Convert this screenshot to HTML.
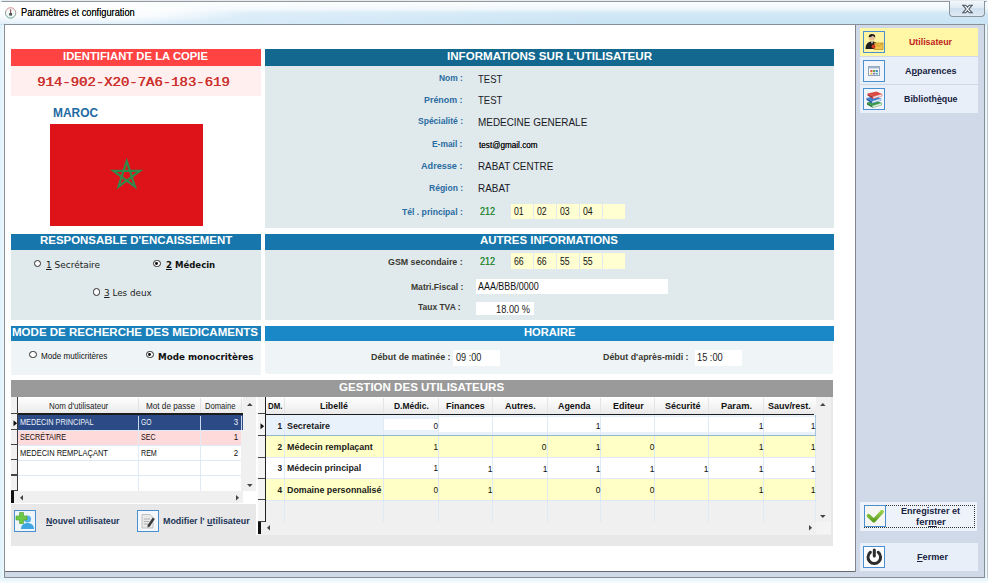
<!DOCTYPE html>
<html lang="fr"><head><meta charset="utf-8"><title>Paramètres et configuration</title>
<style>
*{box-sizing:border-box;margin:0;padding:0}
html,body{width:988px;height:583px;overflow:hidden;background:#e9f6fc;font-family:"Liberation Sans",sans-serif;font-size:11px;color:#1a1a1a}
.a{position:absolute}
.t{white-space:nowrap;transform-origin:0 50%}
u{text-decoration:underline}
svg{display:block}
.rc{width:7.6px;height:7.6px;border:1.1px solid #2a2a2a;border-radius:50%;background:#fff}
.rc i{position:absolute;left:1.3px;top:1.3px;width:2.8px;height:2.8px;background:#111;border-radius:50%}
</style></head><body>
<div class="a" style="left:0px;top:0px;width:988px;height:583px;background:#e8f6fc"></div>
<div class="a" style="left:0px;top:0px;width:988px;height:25px;background:linear-gradient(#e6eaee 0,#e6eaee 1px,#94999e 1px,#94999e 2px,#fbfdfe 2px,#f0f7fc 9px,#d2e8f6 13px,#c9e4f5 23px,#c9e4f5 100%);border-radius:5px 5px 0 0"></div>
<div class="a" style="left:0px;top:2px;width:420px;height:22px;background:radial-gradient(ellipse 170px 13px at 80px 10px,rgba(255,255,255,.95) 0,rgba(255,255,255,.8) 50%,rgba(255,255,255,0) 100%)"></div>
<div class="a" style="left:0px;top:2px;width:600px;height:22px;background:linear-gradient(90deg,rgba(255,255,255,.45),rgba(255,255,255,0))"></div>
<div class="a" style="left:0px;top:25px;width:4px;height:558px;background:linear-gradient(90deg,#dff2fa,#ecf8fd)"></div>
<div class="a" style="left:985px;top:25px;width:3px;height:558px;background:linear-gradient(90deg,#d9eef9,#f4fbfe 60%,#9a9fa5 100%)"></div>
<div class="a" style="left:0px;top:578px;width:988px;height:5px;background:linear-gradient(#e4f3fb,#f6fcfe)"></div>
<div class="a" style="left:4px;top:24px;width:981px;height:554px;background:#d0d9e8;border:1px solid #878e96"></div>
<div class="a" style="left:5px;top:25px;width:850px;height:546.5px;background:#fff"></div>
<div class="a" style="left:5px;top:571px;width:851px;height:1px;background:#666a70"></div>
<div class="a" style="left:855px;top:25px;width:1.3px;height:547px;background:#80858c"></div>
<svg class="a" style="left:4px;top:6px" width="14" height="14" viewBox="0 0 14 14"><defs><linearGradient id="ig" x1="0" y1="0" x2="0" y2="1"><stop offset="0" stop-color="#d98a8a"/><stop offset=".5" stop-color="#9aa3a3"/><stop offset="1" stop-color="#5fa58a"/></linearGradient></defs><circle cx="6.6" cy="6.900" r="5.200" fill="#f3f6f6" stroke="url(#ig)" stroke-width="1"/><path d="M6.600 3.200v4" stroke="#8a5050" stroke-width="1"/><rect x="5.200" y="7" width="2.800" height="2.600" fill="#4a5050"/></svg>
<div class="a t" style="left:21.00px;top:4.80px;font:11px/15px 'Liberation Sans',sans-serif;color:#000;transform:scaleX(0.8414);text-shadow:0 0 .4px rgba(0,0,0,.6);">Paramètres et configuration</div>
<div class="a" style="left:949px;top:1px;width:36px;height:16px;border:1px solid #8b939c;border-top:none;border-radius:0 0 4px 4px;background:linear-gradient(#f3f8fc,#dfeaf4 45%,#cfdfee 50%,#dde9f4)"></div>
<svg class="a" style="left:961px;top:4px" width="13" height="10" viewBox="0 0 13 10"><path d="M1.800 1.200h2.900l1.800 2 1.800-2h2.900l-3.300 3.800 3.300 3.800h-2.900l-1.800-2-1.800 2h-2.900l3.300-3.800z" fill="#fff" stroke="#4e5662" stroke-width="1.100"/></svg>
<div class="a" style="left:11px;top:49px;width:250px;height:17px;background:#ff4343"></div>
<div class="a t" style="left:63.10px;top:49.30px;font:bold 11px/15px 'Liberation Sans',sans-serif;color:#fff;transform:scaleX(1.0256);">IDENTIFIANT DE LA COPIE</div>
<div class="a" style="left:11px;top:66px;width:250px;height:29.6px;background:#ffefee"></div>
<div class="a t" style="left:37.00px;top:74.20px;font:12.5px/18px 'Liberation Mono',monospace;color:#cc2f2c;transform:scaleX(1.1158);text-shadow:.5px 0 0 #cc2f2c;">914-902-X20-7A6-183-619</div>
<div class="a t" style="left:52.50px;top:103.60px;font:bold 12.5px/18px 'Liberation Sans',sans-serif;color:#1d6aa2;transform:scaleX(0.9530);">MAROC</div>
<svg class="a" style="left:50px;top:124px" width="153" height="102" viewBox="0 0 153 102"><rect width="153" height="102" fill="#de1219"/><polygon points="76.7,37.2 84.93,62.53 63.38,46.87 90.02,46.87 68.47,62.53" fill="none" stroke="#2f8a4c" stroke-width="2.2" stroke-linejoin="miter"/></svg>
<div class="a" style="left:11px;top:234px;width:250px;height:16px;background:#1777ac"></div>
<div class="a t" style="left:39.50px;top:232.70px;font:bold 11px/15px 'Liberation Sans',sans-serif;color:#fff;transform:scaleX(1.0403);">RESPONSABLE D'ENCAISSEMENT</div>
<div class="a" style="left:11px;top:250px;width:250px;height:69.5px;background:#e0e9ec"></div>
<div class="a rc" style="left:33.7px;top:259.8px"></div>
<div class="a t" style="left:45.50px;top:258.80px;font:9px/13px 'DejaVu Sans',sans-serif;color:#222;transform:scaleX(0.9943);"><u>1</u> Secrétaire</div>
<div class="a rc" style="left:153.2px;top:259.8px"><i></i></div>
<div class="a t" style="left:166.00px;top:258.80px;font:bold 9px/13px 'DejaVu Sans',sans-serif;color:#111;transform:scaleX(0.9493);"><u>2</u> Médecin</div>
<div class="a rc" style="left:92.7px;top:288.3px"></div>
<div class="a t" style="left:104.00px;top:287.40px;font:9px/13px 'DejaVu Sans',sans-serif;color:#222;transform:scaleX(0.9793);"><u>3</u> Les deux</div>
<div class="a" style="left:11px;top:326px;width:250px;height:14.5px;background:#1b7fba"></div>
<div class="a t" style="left:12.00px;top:324.40px;font:bold 11.5px/16px 'Liberation Sans',sans-serif;color:#fff;transform:scaleX(1.0026);">MODE DE RECHERCHE DES MEDICAMENTS</div>
<div class="a" style="left:11px;top:340.5px;width:250px;height:34.2px;background:#eff4f7"></div>
<div class="a rc" style="left:29.2px;top:350.8px"></div>
<div class="a t" style="left:41.00px;top:348.80px;font:9.5px/13px 'Liberation Sans',sans-serif;color:#111;transform:scaleX(0.8543);">Mode mutlicritères</div>
<div class="a rc" style="left:146.0px;top:350.8px"><i></i></div>
<div class="a t" style="left:158.40px;top:349.90px;font:bold 9.2px/13px 'DejaVu Sans',sans-serif;color:#111;transform:scaleX(0.9520);">Mode monocritères</div>
<div class="a" style="left:265px;top:49px;width:569px;height:17px;background:#13688f"></div>
<div class="a t" style="left:447.00px;top:49.30px;font:bold 11px/15px 'Liberation Sans',sans-serif;color:#fff;transform:scaleX(1.0529);">INFORMATIONS SUR L'UTILISATEUR</div>
<div class="a" style="left:265px;top:66px;width:569px;height:162px;background:#e0e9ec"></div>
<div class="a t" style="left:438.90px;top:72.30px;font:bold 9.3px/13px 'Liberation Sans',sans-serif;color:#2a6ca2;transform:scaleX(0.9071);">Nom :</div>
<div class="a t" style="left:424.30px;top:93.70px;font:bold 9.3px/13px 'Liberation Sans',sans-serif;color:#2a6ca2;transform:scaleX(0.9552);">Prénom :</div>
<div class="a t" style="left:417.80px;top:115.20px;font:bold 9.3px/13px 'Liberation Sans',sans-serif;color:#2a6ca2;transform:scaleX(0.9164);">Spécialité :</div>
<div class="a t" style="left:432.40px;top:137.90px;font:bold 9.3px/13px 'Liberation Sans',sans-serif;color:#2a6ca2;transform:scaleX(0.9050);">E-mail :</div>
<div class="a t" style="left:421.30px;top:160.40px;font:bold 9.3px/13px 'Liberation Sans',sans-serif;color:#2a6ca2;transform:scaleX(0.9791);">Adresse :</div>
<div class="a t" style="left:428.70px;top:181.50px;font:bold 9.3px/13px 'Liberation Sans',sans-serif;color:#2a6ca2;transform:scaleX(0.9168);">Région :</div>
<div class="a t" style="left:402.00px;top:206.00px;font:bold 9.3px/13px 'Liberation Sans',sans-serif;color:#2a6ca2;transform:scaleX(0.9265);">Tél . principal :</div>
<div class="a" style="left:265px;top:234px;width:569px;height:16px;background:#1777ac"></div>
<div class="a t" style="left:480.00px;top:232.70px;font:bold 11px/15px 'Liberation Sans',sans-serif;color:#fff;transform:scaleX(1.0423);">AUTRES INFORMATIONS</div>
<div class="a" style="left:265px;top:250px;width:569px;height:69.5px;background:#e0e9ec"></div>
<div class="a" style="left:265px;top:326px;width:569px;height:14.5px;background:#1a88c7"></div>
<div class="a t" style="left:523.80px;top:324.80px;font:bold 11px/15px 'Liberation Sans',sans-serif;color:#fff;transform:scaleX(1.0133);">HORAIRE</div>
<div class="a" style="left:265px;top:340.5px;width:567.5px;height:33.5px;background:#eff4f7;border-radius:0 0 2px 3px"></div>
<div class="a" style="left:11px;top:380.2px;width:822px;height:17px;background:#9a9a9a"></div>
<div class="a t" style="left:338.50px;top:379.50px;font:bold 11px/15px 'Liberation Sans',sans-serif;color:#fff;transform:scaleX(1.0484);">GESTION DES UTILISATEURS</div>
<div class="a" style="left:11px;top:396.5px;width:822px;height:149px;background:#e8e8e8"></div>
<div class="a t" style="left:477.90px;top:71.20px;font:11.3px/16px 'Liberation Sans',sans-serif;color:#1a1a26;transform:scaleX(0.8414);">TEST</div>
<div class="a t" style="left:477.90px;top:92.40px;font:11.3px/16px 'Liberation Sans',sans-serif;color:#1a1a26;transform:scaleX(0.8414);">TEST</div>
<div class="a t" style="left:477.90px;top:114.20px;font:11.3px/16px 'Liberation Sans',sans-serif;color:#1a1a26;transform:scaleX(0.8791);">MEDECINE GENERALE</div>
<div class="a t" style="left:479.40px;top:137.50px;font:9.5px/13px 'Liberation Sans',sans-serif;color:#000;transform:scaleX(0.8587);text-shadow:0 0 .4px rgba(0,0,0,.7);">test@gmail.com</div>
<div class="a t" style="left:477.90px;top:158.20px;font:11.3px/16px 'Liberation Sans',sans-serif;color:#1a1a26;transform:scaleX(0.8732);">RABAT CENTRE</div>
<div class="a t" style="left:477.90px;top:179.50px;font:11.3px/16px 'Liberation Sans',sans-serif;color:#1a1a26;transform:scaleX(0.8795);">RABAT</div>
<div class="a t" style="left:480.00px;top:204.60px;font:10px/14px 'Liberation Sans',sans-serif;color:#2e8b3a;transform:scaleX(0.9050);text-shadow:0 0 .3px #2e8b3a;">212</div>
<div class="a" style="left:510.9px;top:203.6px;width:21.7px;height:15.2px;background:#ffffd2"></div>
<div class="a t" style="left:513.80px;top:204.80px;font:10px/14px 'Liberation Sans',sans-serif;color:#111;transform:scaleX(0.8720);">01</div>
<div class="a" style="left:533.9px;top:203.6px;width:21.7px;height:15.2px;background:#ffffd2"></div>
<div class="a t" style="left:536.80px;top:204.80px;font:10px/14px 'Liberation Sans',sans-serif;color:#111;transform:scaleX(0.8720);">02</div>
<div class="a" style="left:556.9px;top:203.6px;width:21.7px;height:15.2px;background:#ffffd2"></div>
<div class="a t" style="left:559.80px;top:204.80px;font:10px/14px 'Liberation Sans',sans-serif;color:#111;transform:scaleX(0.8720);">03</div>
<div class="a" style="left:579.9px;top:203.6px;width:21.7px;height:15.2px;background:#ffffd2"></div>
<div class="a t" style="left:582.80px;top:204.80px;font:10px/14px 'Liberation Sans',sans-serif;color:#111;transform:scaleX(0.8720);">04</div>
<div class="a" style="left:602.9px;top:203.6px;width:21.7px;height:15.2px;background:#ffffd2"></div>
<div class="a t" style="left:388.30px;top:255.50px;font:bold 9.3px/13px 'Liberation Sans',sans-serif;color:#3a3a32;transform:scaleX(0.9509);">GSM secondaire :</div>
<div class="a t" style="left:480.00px;top:254.80px;font:10px/14px 'Liberation Sans',sans-serif;color:#2e8b3a;transform:scaleX(0.9050);text-shadow:0 0 .3px #2e8b3a;">212</div>
<div class="a" style="left:510.9px;top:253.4px;width:21.7px;height:15.2px;background:#ffffd2"></div>
<div class="a t" style="left:513.80px;top:254.60px;font:10px/14px 'Liberation Sans',sans-serif;color:#111;transform:scaleX(0.8720);">66</div>
<div class="a" style="left:533.9px;top:253.4px;width:21.7px;height:15.2px;background:#ffffd2"></div>
<div class="a t" style="left:536.80px;top:254.60px;font:10px/14px 'Liberation Sans',sans-serif;color:#111;transform:scaleX(0.8720);">66</div>
<div class="a" style="left:556.9px;top:253.4px;width:21.7px;height:15.2px;background:#ffffd2"></div>
<div class="a t" style="left:559.80px;top:254.60px;font:10px/14px 'Liberation Sans',sans-serif;color:#111;transform:scaleX(0.8720);">55</div>
<div class="a" style="left:579.9px;top:253.4px;width:21.7px;height:15.2px;background:#ffffd2"></div>
<div class="a t" style="left:582.80px;top:254.60px;font:10px/14px 'Liberation Sans',sans-serif;color:#111;transform:scaleX(0.8720);">55</div>
<div class="a" style="left:602.9px;top:253.4px;width:21.7px;height:15.2px;background:#ffffd2"></div>
<div class="a t" style="left:410.70px;top:280.50px;font:bold 9.3px/13px 'Liberation Sans',sans-serif;color:#3a3a32;transform:scaleX(0.9200);">Matri.Fiscal :</div>
<div class="a" style="left:476px;top:279.4px;width:192px;height:14.6px;background:#fff"></div>
<div class="a t" style="left:478.40px;top:280.20px;font:10px/14px 'Liberation Sans',sans-serif;color:#111;transform:scaleX(0.8935);">AAA/BBB/0000</div>
<div class="a t" style="left:418.40px;top:301.40px;font:bold 9.3px/13px 'Liberation Sans',sans-serif;color:#3a3a32;transform:scaleX(0.9094);">Taux TVA :</div>
<div class="a" style="left:476px;top:302.3px;width:58px;height:12.8px;background:#fff"></div>
<div class="a t" style="left:496.40px;top:303.40px;font:10px/14px 'Liberation Sans',sans-serif;color:#222;transform:scaleX(0.9266);">18.00 %</div>
<div class="a t" style="left:371.00px;top:351.30px;font:bold 9.3px/13px 'Liberation Sans',sans-serif;color:#3a3a32;transform:scaleX(0.9568);">Début de matinée :</div>
<div class="a" style="left:453.1px;top:349.8px;width:47px;height:16.3px;background:#fff"></div>
<div class="a t" style="left:456.00px;top:350.60px;font:10px/14px 'Liberation Sans',sans-serif;color:#222;transform:scaleX(0.9100);">09 :00</div>
<div class="a t" style="left:603.40px;top:351.30px;font:bold 9.3px/13px 'Liberation Sans',sans-serif;color:#3a3a32;transform:scaleX(0.9560);">Début d'après-midi :</div>
<div class="a" style="left:694.5px;top:349.8px;width:47px;height:16.3px;background:#fff"></div>
<div class="a t" style="left:697.30px;top:350.60px;font:10px/14px 'Liberation Sans',sans-serif;color:#222;transform:scaleX(0.9244);">15 :00</div>
<div class="a" style="left:11px;top:397px;width:245px;height:106.5px;background:#fff"></div>
<div class="a" style="left:18px;top:397px;width:225px;height:17px;background:linear-gradient(#ffffff,#f2f2f2 60%,#e9e9e9)"></div>
<div class="a" style="left:138px;top:398px;width:1px;height:15px;background:#e2e2e2"></div>
<div class="a" style="left:200px;top:398px;width:1px;height:15px;background:#e2e2e2"></div>
<div class="a" style="left:241px;top:398px;width:1px;height:15px;background:#e2e2e2"></div>
<div class="a" style="left:11px;top:397px;width:7px;height:94px;background:#f1f1f1"></div>
<div class="a" style="left:17px;top:397px;width:1.4px;height:94px;background:#3a3a3a"></div>
<div class="a" style="left:11px;top:429px;width:7px;height:1.2px;background:#444"></div>
<div class="a" style="left:11px;top:444px;width:7px;height:1.2px;background:#444"></div>
<div class="a" style="left:11px;top:459.2px;width:7px;height:1.2px;background:#444"></div>
<div class="a" style="left:11px;top:474.4px;width:7px;height:1.2px;background:#444"></div>
<div class="a" style="left:11px;top:490.2px;width:7px;height:1.2px;background:#444"></div>
<div class="a" style="left:11px;top:413.3px;width:7px;height:1.2px;background:#444"></div>
<div class="a" style="left:18px;top:414.5px;width:225px;height:15.5px;background:#2b4a86"></div>
<div class="a" style="left:18px;top:430px;width:223px;height:15px;background:#ffdada"></div>
<div class="a" style="left:18px;top:429.5px;width:223px;height:1px;background:#deeaf5"></div>
<div class="a" style="left:18px;top:444.5px;width:223px;height:1px;background:#deeaf5"></div>
<div class="a" style="left:18px;top:459.7px;width:223px;height:1px;background:#deeaf5"></div>
<div class="a" style="left:18px;top:474.9px;width:223px;height:1px;background:#deeaf5"></div>
<div class="a" style="left:18px;top:490.7px;width:223px;height:1px;background:#deeaf5"></div>
<div class="a" style="left:138px;top:430px;width:1px;height:61px;background:#deeaf5"></div>
<div class="a" style="left:200px;top:430px;width:1px;height:61px;background:#deeaf5"></div>
<div class="a" style="left:138px;top:415.5px;width:1.3px;height:14px;background:#c9d9ee"></div>
<div class="a" style="left:200px;top:415.5px;width:1.3px;height:14px;background:#c9d9ee"></div>
<div class="a" style="left:241px;top:415.5px;width:1.3px;height:14px;background:#c9d9ee"></div>
<div class="a" style="left:241px;top:430px;width:2px;height:61px;background:#f0f0f0"></div>
<div class="a" style="left:18px;top:413.4px;width:225px;height:2px;background:#1c1c1c"></div>
<div class="a t" style="left:48.60px;top:399.90px;font:9.3px/13px 'Liberation Sans',sans-serif;color:#222;transform:scaleX(0.8598);">Nom d'utilisateur</div>
<div class="a t" style="left:145.50px;top:399.90px;font:9.3px/13px 'Liberation Sans',sans-serif;color:#222;transform:scaleX(0.8776);">Mot de passe</div>
<div class="a t" style="left:205.00px;top:399.90px;font:9.3px/13px 'Liberation Sans',sans-serif;color:#222;transform:scaleX(0.8195);">Domaine</div>
<div class="a t" style="left:20.30px;top:416.00px;font:9.3px/13px 'Liberation Sans',sans-serif;color:#eef3fb;transform:scaleX(0.7829);">MEDECIN PRINCIPAL</div>
<div class="a t" style="left:140.50px;top:416.00px;font:9.3px/13px 'Liberation Sans',sans-serif;color:#eef3fb;transform:scaleX(0.7258);">GO</div>
<div class="a t" style="right:749.40px;top:416.00px;font:9.3px/13px 'Liberation Sans',sans-serif;color:#eef3fb;transform-origin:100% 50%;transform:scaleX(0.850)">3</div>
<div class="a t" style="left:20.30px;top:431.30px;font:9.3px/13px 'Liberation Sans',sans-serif;color:#1a0f0f;transform:scaleX(0.7865);">SECRÉTAIRE</div>
<div class="a t" style="left:140.50px;top:431.30px;font:9.3px/13px 'Liberation Sans',sans-serif;color:#1a0f0f;transform:scaleX(0.7582);">SEC</div>
<div class="a t" style="right:749.40px;top:431.30px;font:9.3px/13px 'Liberation Sans',sans-serif;color:#1a0f0f;transform-origin:100% 50%;transform:scaleX(0.850)">1</div>
<div class="a t" style="left:20.30px;top:446.60px;font:9.3px/13px 'Liberation Sans',sans-serif;color:#111;transform:scaleX(0.8062);">MEDECIN REMPLAÇANT</div>
<div class="a t" style="left:140.50px;top:446.60px;font:9.3px/13px 'Liberation Sans',sans-serif;color:#111;transform:scaleX(0.7645);">REM</div>
<div class="a t" style="right:749.40px;top:446.60px;font:9.3px/13px 'Liberation Sans',sans-serif;color:#111;transform-origin:100% 50%;transform:scaleX(0.850)">2</div>
<svg class="a" style="left:11px;top:418.5px" width="7" height="9"><path d="M2.500 1.200l3.600 3-3.600 3z" fill="#111"/></svg>
<div class="a" style="left:243px;top:397px;width:12.5px;height:94.3px;background:#f0f0f0"></div>
<svg class="a" style="left:246px;top:402px" width="8" height="5"><path d="M1 4l2.800-3 2.800 3z" fill="#444"/></svg>
<svg class="a" style="left:246px;top:483px" width="8" height="5"><path d="M1 1l2.800 3 2.800-3z" fill="#444"/></svg>
<div class="a" style="left:11px;top:491.3px;width:244.5px;height:12px;background:#f0f0f0"></div>
<div class="a" style="left:243px;top:491.3px;width:12.5px;height:12px;background:#fff"></div>
<div class="a" style="left:11px;top:491.3px;width:3.4px;height:12px;background:#111"></div>
<svg class="a" style="left:19px;top:493.5px" width="5" height="8"><path d="M4 1l-3 2.800 3 2.800z" fill="#444"/></svg>
<svg class="a" style="left:235px;top:493.5px" width="5" height="8"><path d="M1 1l3 2.800-3 2.800z" fill="#444"/></svg>
<div class="a" style="left:256px;top:397px;width:2px;height:138px;background:#fff"></div>
<div class="a" style="left:258px;top:397px;width:572.5px;height:137.5px;background:#f0f0f0"></div>
<div class="a" style="left:266px;top:397px;width:550px;height:17px;background:linear-gradient(#ffffff,#f3f3f3 60%,#e9e9e9)"></div>
<div class="a" style="left:258px;top:397px;width:7px;height:125px;background:#f4f4f4"></div>
<div class="a" style="left:264.8px;top:397px;width:1.4px;height:125px;background:#222"></div>
<div class="a" style="left:258px;top:412.5px;width:7px;height:1.2px;background:#444"></div>
<div class="a" style="left:258px;top:434.8px;width:7px;height:1.2px;background:#444"></div>
<div class="a" style="left:258px;top:456.5px;width:7px;height:1.2px;background:#444"></div>
<div class="a" style="left:258px;top:477.7px;width:7px;height:1.2px;background:#444"></div>
<div class="a" style="left:258px;top:499px;width:7px;height:1.2px;background:#444"></div>
<div class="a" style="left:258px;top:521px;width:7px;height:1.2px;background:#444"></div>
<div class="a" style="left:266px;top:415.3px;width:549px;height:20.5px;background:#e9f1fb"></div>
<div class="a" style="left:383.8px;top:419px;width:54px;height:10.9px;background:#fff"></div>
<div class="a" style="left:438.5px;top:417px;width:376px;height:15.3px;background:#fff"></div>
<div class="a" style="left:266px;top:435.8px;width:549px;height:21.69999999999999px;background:#ffffc6"></div>
<div class="a" style="left:266px;top:457.5px;width:549px;height:21.19999999999999px;background:#fff"></div>
<div class="a" style="left:266px;top:478.7px;width:549px;height:21.30000000000001px;background:#ffffc6"></div>
<div class="a" style="left:266px;top:435.3px;width:549px;height:1px;background:#deeaf5"></div>
<div class="a" style="left:266px;top:457.0px;width:549px;height:1px;background:#deeaf5"></div>
<div class="a" style="left:266px;top:478.2px;width:549px;height:1px;background:#deeaf5"></div>
<div class="a" style="left:266px;top:499.5px;width:549px;height:1px;background:#deeaf5"></div>
<div class="a" style="left:283.5px;top:415px;width:1px;height:107px;background:#deeaf5"></div>
<div class="a" style="left:382.5px;top:415px;width:1px;height:107px;background:#deeaf5"></div>
<div class="a" style="left:437.5px;top:415px;width:1px;height:107px;background:#deeaf5"></div>
<div class="a" style="left:491.8px;top:415px;width:1px;height:107px;background:#deeaf5"></div>
<div class="a" style="left:546.5px;top:415px;width:1px;height:107px;background:#deeaf5"></div>
<div class="a" style="left:600.2px;top:415px;width:1px;height:107px;background:#deeaf5"></div>
<div class="a" style="left:654.2px;top:415px;width:1px;height:107px;background:#deeaf5"></div>
<div class="a" style="left:707.8px;top:415px;width:1px;height:107px;background:#deeaf5"></div>
<div class="a" style="left:763.3px;top:415px;width:1px;height:107px;background:#deeaf5"></div>
<div class="a" style="left:814.5px;top:415px;width:1px;height:107px;background:#deeaf5"></div>
<div class="a" style="left:283.5px;top:398px;width:1px;height:15px;background:#e4e4e4"></div>
<div class="a" style="left:382.5px;top:398px;width:1px;height:15px;background:#e4e4e4"></div>
<div class="a" style="left:437.5px;top:398px;width:1px;height:15px;background:#e4e4e4"></div>
<div class="a" style="left:491.8px;top:398px;width:1px;height:15px;background:#e4e4e4"></div>
<div class="a" style="left:546.5px;top:398px;width:1px;height:15px;background:#e4e4e4"></div>
<div class="a" style="left:600.2px;top:398px;width:1px;height:15px;background:#e4e4e4"></div>
<div class="a" style="left:654.2px;top:398px;width:1px;height:15px;background:#e4e4e4"></div>
<div class="a" style="left:707.8px;top:398px;width:1px;height:15px;background:#e4e4e4"></div>
<div class="a" style="left:763.3px;top:398px;width:1px;height:15px;background:#e4e4e4"></div>
<div class="a" style="left:266px;top:434.9px;width:550px;height:1.2px;background:#94b6c8"></div>
<div class="a" style="left:814.6px;top:415.3px;width:1.2px;height:20px;background:#a4c6df"></div>
<div class="a" style="left:266px;top:413.6px;width:548px;height:1.7px;background:#1c1c1c"></div>
<div class="a t" style="left:268.00px;top:399.40px;font:bold 9.6px/13px 'Liberation Sans',sans-serif;color:#111;transform:scaleX(0.8240);">DM.</div>
<div class="a t" style="left:320.00px;top:399.40px;font:bold 9.6px/13px 'Liberation Sans',sans-serif;color:#111;transform:scaleX(0.9208);">Libellé</div>
<div class="a t" style="left:393.70px;top:399.40px;font:bold 9.6px/13px 'Liberation Sans',sans-serif;color:#111;transform:scaleX(0.8816);">D.Médic.</div>
<div class="a t" style="left:446.20px;top:399.40px;font:bold 9.6px/13px 'Liberation Sans',sans-serif;color:#111;transform:scaleX(0.9323);">Finances</div>
<div class="a t" style="left:505.00px;top:399.40px;font:bold 9.6px/13px 'Liberation Sans',sans-serif;color:#111;transform:scaleX(0.9312);">Autres.</div>
<div class="a t" style="left:557.50px;top:399.40px;font:bold 9.6px/13px 'Liberation Sans',sans-serif;color:#111;transform:scaleX(0.9232);">Agenda</div>
<div class="a t" style="left:613.00px;top:399.40px;font:bold 9.6px/13px 'Liberation Sans',sans-serif;color:#111;transform:scaleX(0.9313);">Editeur</div>
<div class="a t" style="left:664.50px;top:399.40px;font:bold 9.6px/13px 'Liberation Sans',sans-serif;color:#111;transform:scaleX(0.9370);">Sécurité</div>
<div class="a t" style="left:720.80px;top:399.40px;font:bold 9.6px/13px 'Liberation Sans',sans-serif;color:#111;transform:scaleX(0.9681);">Param.</div>
<div class="a t" style="left:768.00px;top:399.40px;font:bold 9.6px/13px 'Liberation Sans',sans-serif;color:#111;transform:scaleX(0.9326);">Sauv/rest.</div>
<div class="a t" style="right:705.80px;top:419.50px;font:bold 9px/13px 'Liberation Sans',sans-serif;color:#1a1a1a;transform-origin:100% 50%;transform:scaleX(0.920)">1</div>
<div class="a t" style="left:287.00px;top:419.50px;font:bold 9px/13px 'Liberation Sans',sans-serif;color:#1a1a1a;transform:scaleX(0.9878);">Secretaire</div>
<div class="a t" style="right:550.20px;top:419.50px;font:9px/13px 'Liberation Sans',sans-serif;color:#111;transform-origin:100% 50%;transform:scaleX(0.900)">0</div>
<div class="a t" style="right:387.30px;top:419.00px;font:9.6px/13px 'Liberation Sans',sans-serif;color:#111;transform-origin:100% 50%;transform:scaleX(0.880)">1</div>
<div class="a t" style="right:224.20px;top:419.00px;font:9.6px/13px 'Liberation Sans',sans-serif;color:#111;transform-origin:100% 50%;transform:scaleX(0.880)">1</div>
<div class="a t" style="right:173.00px;top:419.00px;font:9.6px/13px 'Liberation Sans',sans-serif;color:#111;transform-origin:100% 50%;transform:scaleX(0.880)">1</div>
<div class="a t" style="right:705.80px;top:440.50px;font:bold 9px/13px 'Liberation Sans',sans-serif;color:#1a1a1a;transform-origin:100% 50%;transform:scaleX(0.920)">2</div>
<div class="a t" style="left:287.00px;top:440.50px;font:bold 9px/13px 'Liberation Sans',sans-serif;color:#1a1a1a;transform:scaleX(0.9904);">Médecin remplaçant</div>
<div class="a t" style="right:550.20px;top:440.50px;font:9px/13px 'Liberation Sans',sans-serif;color:#111;transform-origin:100% 50%;transform:scaleX(0.900)">1</div>
<div class="a t" style="right:441.40px;top:440.00px;font:9.6px/13px 'Liberation Sans',sans-serif;color:#111;transform-origin:100% 50%;transform:scaleX(0.880)">0</div>
<div class="a t" style="right:387.30px;top:440.00px;font:9.6px/13px 'Liberation Sans',sans-serif;color:#111;transform-origin:100% 50%;transform:scaleX(0.880)">1</div>
<div class="a t" style="right:333.70px;top:440.00px;font:9.6px/13px 'Liberation Sans',sans-serif;color:#111;transform-origin:100% 50%;transform:scaleX(0.880)">0</div>
<div class="a t" style="right:224.20px;top:440.00px;font:9.6px/13px 'Liberation Sans',sans-serif;color:#111;transform-origin:100% 50%;transform:scaleX(0.880)">1</div>
<div class="a t" style="right:173.00px;top:440.00px;font:9.6px/13px 'Liberation Sans',sans-serif;color:#111;transform-origin:100% 50%;transform:scaleX(0.880)">1</div>
<div class="a t" style="right:705.80px;top:462.20px;font:bold 9px/13px 'Liberation Sans',sans-serif;color:#1a1a1a;transform-origin:100% 50%;transform:scaleX(0.920)">3</div>
<div class="a t" style="left:287.00px;top:462.20px;font:bold 9px/13px 'Liberation Sans',sans-serif;color:#1a1a1a;transform:scaleX(0.9761);">Médecin principal</div>
<div class="a t" style="right:550.20px;top:462.20px;font:9px/13px 'Liberation Sans',sans-serif;color:#111;transform-origin:100% 50%;transform:scaleX(0.900)">1</div>
<div class="a t" style="right:495.70px;top:461.70px;font:9.6px/13px 'Liberation Sans',sans-serif;color:#111;transform-origin:100% 50%;transform:scaleX(0.880)">1</div>
<div class="a t" style="right:441.00px;top:461.70px;font:9.6px/13px 'Liberation Sans',sans-serif;color:#111;transform-origin:100% 50%;transform:scaleX(0.880)">1</div>
<div class="a t" style="right:387.30px;top:461.70px;font:9.6px/13px 'Liberation Sans',sans-serif;color:#111;transform-origin:100% 50%;transform:scaleX(0.880)">1</div>
<div class="a t" style="right:333.30px;top:461.70px;font:9.6px/13px 'Liberation Sans',sans-serif;color:#111;transform-origin:100% 50%;transform:scaleX(0.880)">1</div>
<div class="a t" style="right:279.70px;top:461.70px;font:9.6px/13px 'Liberation Sans',sans-serif;color:#111;transform-origin:100% 50%;transform:scaleX(0.880)">1</div>
<div class="a t" style="right:224.20px;top:461.70px;font:9.6px/13px 'Liberation Sans',sans-serif;color:#111;transform-origin:100% 50%;transform:scaleX(0.880)">1</div>
<div class="a t" style="right:173.00px;top:461.70px;font:9.6px/13px 'Liberation Sans',sans-serif;color:#111;transform-origin:100% 50%;transform:scaleX(0.880)">1</div>
<div class="a t" style="right:705.80px;top:483.60px;font:bold 9px/13px 'Liberation Sans',sans-serif;color:#1a1a1a;transform-origin:100% 50%;transform:scaleX(0.920)">4</div>
<div class="a t" style="left:287.00px;top:483.60px;font:bold 9px/13px 'Liberation Sans',sans-serif;color:#1a1a1a;transform:scaleX(0.9830);">Domaine personnalisé</div>
<div class="a t" style="right:550.20px;top:483.60px;font:9px/13px 'Liberation Sans',sans-serif;color:#111;transform-origin:100% 50%;transform:scaleX(0.900)">0</div>
<div class="a t" style="right:495.70px;top:483.10px;font:9.6px/13px 'Liberation Sans',sans-serif;color:#111;transform-origin:100% 50%;transform:scaleX(0.880)">1</div>
<div class="a t" style="right:387.70px;top:483.10px;font:9.6px/13px 'Liberation Sans',sans-serif;color:#111;transform-origin:100% 50%;transform:scaleX(0.880)">0</div>
<div class="a t" style="right:333.70px;top:483.10px;font:9.6px/13px 'Liberation Sans',sans-serif;color:#111;transform-origin:100% 50%;transform:scaleX(0.880)">0</div>
<div class="a t" style="right:224.20px;top:483.10px;font:9.6px/13px 'Liberation Sans',sans-serif;color:#111;transform-origin:100% 50%;transform:scaleX(0.880)">1</div>
<div class="a t" style="right:173.00px;top:483.10px;font:9.6px/13px 'Liberation Sans',sans-serif;color:#111;transform-origin:100% 50%;transform:scaleX(0.880)">1</div>
<svg class="a" style="left:258px;top:422px" width="7" height="9"><path d="M2.500 1.200l3.600 3-3.600 3z" fill="#111"/></svg>
<div class="a" style="left:816px;top:397px;width:14.5px;height:125px;background:#f0f0f0"></div>
<svg class="a" style="left:819px;top:402px" width="8" height="5"><path d="M1 4l2.800-3 2.800 3z" fill="#444"/></svg>
<svg class="a" style="left:819px;top:513.5px" width="8" height="5"><path d="M1 1l2.800 3 2.800-3z" fill="#444"/></svg>
<div class="a" style="left:258px;top:522.2px;width:558px;height:12.3px;background:#f0f0f0"></div>
<div class="a" style="left:816px;top:522.2px;width:14.5px;height:12.3px;background:#f4f4f4"></div>
<div class="a" style="left:258px;top:522.2px;width:3.4px;height:12.3px;background:#111"></div>
<svg class="a" style="left:266px;top:524.3px" width="5" height="8"><path d="M4 1l-3 2.800 3 2.800z" fill="#444"/></svg>
<svg class="a" style="left:807.5px;top:524.3px" width="5" height="8"><path d="M1 1l3 2.800-3 2.800z" fill="#444"/></svg>
<div class="a" style="left:14px;top:510px;width:22px;height:22px;border:1px solid #4a90d0;background:#eef5fb"><svg width="20" height="20" viewBox="0 0 20 20"><circle cx="12.500" cy="8" r="3.600" fill="#52b4ea"/><path d="M6 18c0-4 3-6 6.500-6s6.500 2 6.500 6z" fill="#3fa6e2"/><path d="M4.500 1.500h4v3.500h3.500v4h-3.500v3.500h-4v-3.500h-3.500v-4h3.500z" fill="#6cc845" stroke="#4aa030" stroke-width=".6"/></svg></div>
<div class="a t" style="left:45.50px;top:515.00px;font:bold 9px/13px 'Liberation Sans',sans-serif;color:#1c3558;transform:scaleX(0.9733);"><u>N</u>ouvel utilisateur</div>
<div class="a" style="left:137px;top:510px;width:22px;height:22px;border:1px solid #4a90d0;background:#f4f8fc"><svg width="20" height="20" viewBox="0 0 20 20"><path d="M4 3.500h8l3 3v10.500h-11z" fill="#e9e9e9" stroke="#b5b5b5" stroke-width=".8"/><path d="M6 8h6M6 10.500h5M6 13h4" stroke="#b0b0b0" stroke-width="1"/><path d="M14.800 6.500l2 1.500-5 7.500-2.300 1 .2-2.600z" fill="#3a3a3a"/></svg></div>
<div class="a t" style="left:163.00px;top:515.00px;font:bold 9px/13px 'Liberation Sans',sans-serif;color:#1c3558;transform:scaleX(0.9880);">Modifier l' <u>u</u>tilisateur</div>
<div class="a" style="left:860px;top:28px;width:117.5px;height:27.5px;background:#fff7a6"></div>
<div class="a" style="left:860px;top:56.5px;width:117.5px;height:27.8px;background:#e9eff9"></div>
<div class="a" style="left:860px;top:85px;width:117.5px;height:27.7px;background:#e9eff9"></div>
<div class="a" style="left:863px;top:30.5px;width:22px;height:22px;border:1px solid #4a90d0;background:#fff"><svg width="20" height="20" viewBox="0 0 20 20"><rect width="20" height="20" fill="#fdf3a0"/><circle cx="8" cy="5.400" r="3.100" fill="#e8bf98"/><path d="M4.700 5.300a3.300 3.300 0 0 1 6.600 0c-1.200-.2-2-1-2.400-1.800-.8 1-2.400 1.700-4.200 1.800z" fill="#1c1c1c"/><path d="M1.500 17c0-5 2.500-7.500 6.500-7.500s6.500 2.500 6.500 7.500z" fill="#1e1e1e"/><path d="M7 9.500l1 2.500 1-2.500z" fill="#fff"/><rect x="10.500" y="11" width="8.500" height="6.500" fill="#f0c24a" stroke="#b98a1e" stroke-width=".7"/><path d="M10.500 11l4.250 3.300 4.250-3.300" fill="none" stroke="#b98a1e" stroke-width=".7"/><circle cx="9.500" cy="14.500" r="2" fill="#d23a2a"/></svg></div>
<div class="a t" style="left:908.50px;top:36.10px;font:bold 9px/13px 'Liberation Sans',sans-serif;color:#c0221a;transform:scaleX(0.9770);">Utilisateur</div>
<div class="a" style="left:863px;top:59.5px;width:22px;height:22px;border:1px solid #4a90d0;background:#fff"><svg width="20" height="20" viewBox="0 0 20 20"><rect width="20" height="20" fill="#f2f6fc"/><rect x="4.500" y="5.500" width="11" height="9" fill="#fff" stroke="#8fa2b8" stroke-width="1"/><rect x="4.500" y="5.500" width="11" height="2" fill="#9fb4cc"/><rect x="6.300" y="9" width="2.200" height="2" fill="#e2574c"/><rect x="9" y="9" width="2.200" height="2" fill="#5aa846"/><rect x="11.700" y="9" width="2.200" height="2" fill="#4a86d0"/><rect x="6.300" y="11.700" width="2.200" height="1.800" fill="#e8b23a"/><rect x="9" y="11.700" width="2.200" height="1.800" fill="#8a6fc0"/><rect x="11.700" y="11.700" width="2.200" height="1.800" fill="#4ab0b0"/></svg></div>
<div class="a t" style="left:904.50px;top:65.00px;font:bold 9px/13px 'Liberation Sans',sans-serif;color:#17233f;transform:scaleX(0.9996);">A<u>p</u>parences</div>
<div class="a" style="left:863px;top:87.5px;width:22px;height:22px;border:1px solid #4a90d0;background:#fff"><svg width="20" height="20" viewBox="0 0 20 20"><rect width="20" height="20" fill="#f2f6fc"/><path d="M3 13.500l9-2 5.500 2.500-9 2.700z" fill="#3a9a4a"/><path d="M3 13.500v2l5.500 3.200v-2z" fill="#2a7a3a"/><path d="M8.500 16.700l9-2.700v2l-9 2.700z" fill="#f4f4f4" stroke="#3a9a4a" stroke-width=".5"/><path d="M2.500 9l9-2 5.500 2.500-9 2.700z" fill="#3f7fd0"/><path d="M2.500 9v2l5.500 3.200v-2z" fill="#2a5fa8"/><path d="M8 12.200l9-2.700v2l-9 2.700z" fill="#f4f4f4" stroke="#3f7fd0" stroke-width=".5"/><path d="M3.500 4.500l9-2 5.500 2.500-9 2.700z" fill="#dc4a44"/><path d="M3.500 4.500v2l5.500 3.200v-2z" fill="#b0302c"/><path d="M9 7.700l9-2.700v2l-9 2.700z" fill="#f4f4f4" stroke="#dc4a44" stroke-width=".5"/></svg></div>
<div class="a t" style="left:903.50px;top:93.20px;font:bold 9px/13px 'Liberation Sans',sans-serif;color:#17233f;transform:scaleX(0.9817);">Biblioth<u>è</u>que</div>
<div class="a" style="left:860px;top:502px;width:116.5px;height:28.5px;background:#eef2fa"></div>
<div class="a" style="left:863.5px;top:504.5px;width:111.5px;height:23.5px;border:1px dotted #333"></div>
<div class="a" style="left:863.5px;top:505px;width:22px;height:22px;border:1px solid #4a90d0;background:#f6f6f3"><svg width="20" height="20" viewBox="0 0 20 20"><defs><linearGradient id="cg" x1="0" y1="0" x2="0" y2="1"><stop offset="0" stop-color="#9ad04a"/><stop offset="1" stop-color="#5a9e22"/></linearGradient></defs><path d="M3.500 9.700l5.300 5 8.200-9" fill="none" stroke="url(#cg)" stroke-width="3.800" stroke-linecap="round" stroke-linejoin="round"/></svg></div>
<div class="a t" style="left:901.20px;top:505.30px;font:bold 9px/13px 'Liberation Sans',sans-serif;color:#17233f;transform:scaleX(1.0081);">Enregistrer et</div>
<div class="a t" style="left:916.30px;top:515.70px;font:bold 9px/13px 'Liberation Sans',sans-serif;color:#17233f;transform:scaleX(1.0601);">fer<u>m</u>er</div>
<div class="a" style="left:860px;top:543px;width:118px;height:27.5px;background:#e9eff9"></div>
<div class="a" style="left:863px;top:546px;width:22px;height:22px;border:1px solid #4a90d0;background:#fff"><svg width="20" height="20" viewBox="0 0 20 20"><path d="M6.400 5.300a6.300 6.300 0 1 0 7.800 0" fill="none" stroke="#2c2c2c" stroke-width="3" stroke-linecap="round"/><path d="M10.300 3v6" stroke="#2c2c2c" stroke-width="3" stroke-linecap="round"/></svg></div>
<div class="a t" style="left:916.50px;top:550.80px;font:bold 9px/13px 'Liberation Sans',sans-serif;color:#17233f;transform:scaleX(1.0159);"><u>F</u>ermer</div>
</body></html>
